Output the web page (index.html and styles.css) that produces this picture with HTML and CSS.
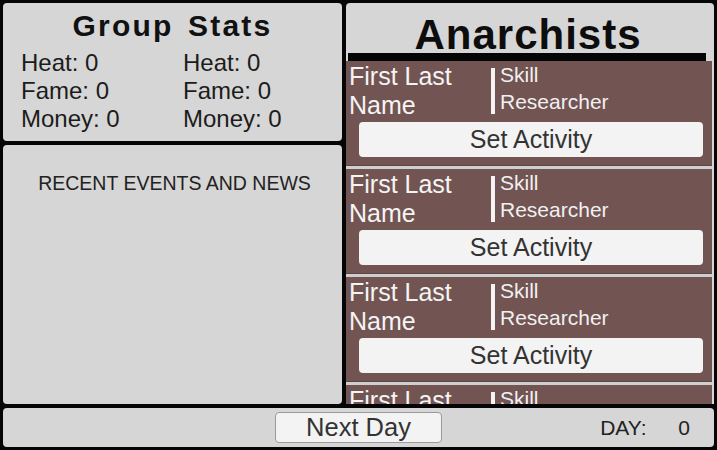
FILE: index.html
```html
<!DOCTYPE html>
<html lang="en">
  <head>
    <meta charset="UTF-8" />
    <meta name="viewport" content="width=device-width, initial-scale=1.0" />
    <title>Anarchists</title>
    <link rel="stylesheet" href="styles.css">
  </head>
  <body>
    <main class="screen">
      <section class="panel stats">
        <h2 class="stats-title">Group Stats</h2>
        <div class="stats-grid">
          <div class="stats-col">
            <p>Heat: 0</p>
            <p>Fame: 0</p>
            <p>Money: 0</p>
          </div>
          <div class="stats-col">
            <p>Heat: 0</p>
            <p>Fame: 0</p>
            <p>Money: 0</p>
          </div>
        </div>
      </section>

      <section class="panel roster">
        <h1 class="roster-title">Anarchists</h1>
        <div class="roster-bar"></div>
        <div class="roster-list">
          <article class="member">
            <div class="member-top">
              <p class="member-name">First Last Name</p>
              <div class="member-skill">
                <p>Skill</p>
                <p>Researcher</p>
              </div>
            </div>
            <button class="btn activity">Set Activity</button>
          </article>
          <article class="member">
            <div class="member-top">
              <p class="member-name">First Last Name</p>
              <div class="member-skill">
                <p>Skill</p>
                <p>Researcher</p>
              </div>
            </div>
            <button class="btn activity">Set Activity</button>
          </article>
          <article class="member">
            <div class="member-top">
              <p class="member-name">First Last Name</p>
              <div class="member-skill">
                <p>Skill</p>
                <p>Researcher</p>
              </div>
            </div>
            <button class="btn activity">Set Activity</button>
          </article>
          <article class="member">
            <div class="member-top">
              <p class="member-name">First Last Name</p>
              <div class="member-skill">
                <p>Skill</p>
                <p>Researcher</p>
              </div>
            </div>
            <button class="btn activity">Set Activity</button>
          </article>
        </div>
      </section>

      <section class="panel news">
        <h3 class="news-title">RECENT EVENTS AND NEWS</h3>
      </section>

      <footer class="panel bottom">
        <button class="btn next">Next Day</button>
        <div class="day">
          <span>DAY:</span>
          <span class="day-num">0</span>
        </div>
      </footer>
    </main>
  </body>
</html>
```

FILE: styles.css
```css
* {
  box-sizing: border-box;
}

body {
  margin: 0;
  background-color: #050505;
  font-family: "Liberation Sans", Arial, sans-serif;
}

p,
h1,
h2,
h3 {
  margin: 0;
}

.screen {
  width: 717px;
  height: 450px;
  padding: 3px;
  display: grid;
  grid-template-columns: 339px 368px;
  grid-template-rows: 138px 259px 39px;
  column-gap: 4px;
  row-gap: 4px;
}

.panel {
  background-color: #d6d6d6;
  border-radius: 4px;
}

/* group stats */
.stats {
  padding: 7px 0 0 18px;
}

.stats-title {
  text-align: center;
  font-size: 30px;
  line-height: 32px;
  letter-spacing: 2.2px;
  word-spacing: 4px;
  color: #111;
  padding-right: 18px;
}

.stats-grid {
  display: grid;
  grid-template-columns: 162px 1fr;
  margin-top: 7px;
}

.stats-col p {
  font-size: 24px;
  line-height: 28px;
  color: #1c1c1c;
}

/* news */
.news {
  grid-column: 1;
  grid-row: 2;
  padding-top: 27px;
}

.news-title {
  font-weight: normal;
  font-size: 19.5px;
  text-align: center;
  color: #222;
  padding-left: 4px;
}

/* roster */
.roster {
  grid-column: 2;
  grid-row: 1 / 3;
  display: flex;
  flex-direction: column;
  overflow: hidden;
  border-radius: 4px 4px 0 0;
}

.roster-title {
  height: 50px;
  flex-shrink: 0;
  text-align: center;
  font-size: 42px;
  line-height: 64px;
  letter-spacing: 1px;
  color: #0d0d0d;
  padding-right: 4px;
}

.roster-bar {
  height: 8px;
  flex-shrink: 0;
  margin: 0 8px 0 2px;
  background-color: #050505;
}

.roster-list {
  flex: 1;
  overflow: hidden;
  margin-right: 2px;
  background-color: #725453;
}

.member {
  height: 108px;
  padding: 0 9px 0 3px;
  border-bottom: 3px solid #cfcfcf;
  box-shadow: inset 0 -1px 0 #5c4544;
}

.member-top {
  display: flex;
  height: 61px;
  padding-top: 1px;
}

.member-name {
  width: 142px;
  font-size: 25px;
  line-height: 29px;
  color: #f4f4f4;
}

.member-skill {
  border-left: 4px solid #f4f4f4;
  height: 46px;
  margin-top: 6px;
  padding-left: 5px;
}

.member-skill p {
  font-size: 21px;
  line-height: 27px;
  color: #f0f0f0;
  position: relative;
  top: -7px;
}

.btn {
  font-family: "Liberation Sans", Arial, sans-serif;
  background-color: #f3f3f3;
  color: #333;
  border: none;
  border-radius: 4px;
  cursor: pointer;
  padding: 0;
}

.btn:hover {
  background-color: #e4e4e4;
}

.activity {
  display: block;
  width: 344px;
  height: 35px;
  margin-left: 10px;
  font-size: 25px;
  line-height: 35px;
}

/* bottom bar */
.bottom {
  grid-column: 1 / 3;
  grid-row: 3;
  display: flex;
  align-items: center;
  padding: 0 24px 0 272px;
}

.next {
  width: 167px;
  height: 31px;
  font-size: 25.5px;
  line-height: 29px;
  border: 1px solid #9a9a9a;
}

.day {
  margin-left: auto;
  font-size: 21px;
  line-height: 24px;
  color: #222;
}

.day-num {
  margin-left: 26px;
}
```
